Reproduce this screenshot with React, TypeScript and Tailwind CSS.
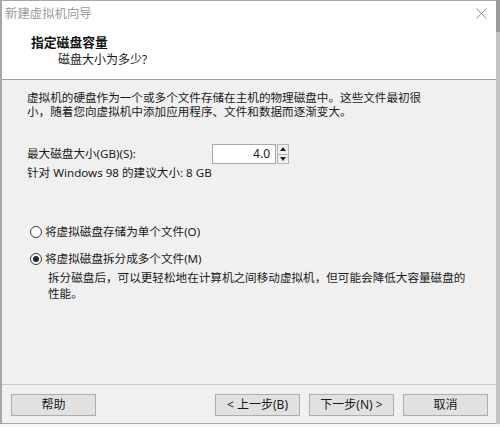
import React from "react";

const font = { fontFamily: '"Noto Sans", "Noto Sans CJK SC", sans-serif' };

function Btn({ children, className = "" }: { children: React.ReactNode; className?: string }) {
  return (
    <div
      className={
        "w-[85px] h-[22px] flex items-center justify-center border border-[#adadad] bg-[#e1e1e1] text-[12px] leading-[14px] text-[#1a1a1a] " +
        className
      }
    >
      {children}
    </div>
  );
}

function Radio({ checked }: { checked?: boolean }) {
  return (
    <div className="w-[12px] h-[12px] rounded-full border border-[#3a3a3a] bg-white flex items-center justify-center shrink-0">
      {checked && <div className="w-[6px] h-[6px] rounded-full bg-[#262626]" />}
    </div>
  );
}

export default function App() {
  return (
    <div className="w-[500px] h-[427px] bg-[#f7f7f7] flex overflow-hidden" style={font}>
      <div className="w-[496px] h-[424px] flex flex-col border-l-2 border-t border-b border-[#a6a6a6] bg-white">
        {/* title bar */}
        <div className="h-[25px] flex items-center justify-between pl-[3px] pr-[9px] bg-white">
          <span className="text-[12.4px] leading-[14px] text-[#9a9a9a]">新建虚拟机向导</span>
          <svg width="11" height="11" viewBox="0 0 11 11" className="text-[#8a8a8a]">
            <path d="M0.5 0.5 L10.5 10.5 M10.5 0.5 L0.5 10.5" stroke="currentColor" strokeWidth="1" />
          </svg>
        </div>
        {/* header */}
        <div className="h-[54px] bg-white pl-[29px] pt-[8px] border-b border-[#a0a0a0]">
          <div className="text-[12.8px] leading-[16px] font-bold text-[#111]">指定磁盘容量</div>
          <div className="mt-[2px] pl-[27px] text-[12px] leading-[16px] text-[#1a1a1a]">磁盘大小为多少?</div>
        </div>
        {/* body */}
        <div className="flex-1 bg-[#f0f0f0] flex flex-col">
          <div className="flex-1 px-[25px] pt-[11px] text-[11.6px] text-[#1a1a1a]">
            <div className="leading-[14px]">
              <div>虚拟机的硬盘作为一个或多个文件存储在主机的物理磁盘中。这些文件最初很</div>
              <div>小，随着您向虚拟机中添加应用程序、文件和数据而逐渐变大。</div>
            </div>
            <div className="mt-[25px] flex items-center h-[20px]">
              <span className="w-[185px] leading-[14px]">最大磁盘大小(GB)(S):</span>
              <div className="flex h-[20px]">
                <div className="w-[64px] h-[20px] bg-white border border-[#a8a8a8] flex items-center justify-end pr-[5px] text-[12px] leading-[14px]">
                  4.0
                </div>
                <div className="ml-[1px] w-[12px] h-[20px] flex flex-col border border-[#b5b5b5] bg-[#f0f0f0]">
                  <div className="flex-1 flex items-center justify-center border-b border-[#b5b5b5]">
                    <svg width="6" height="4" viewBox="0 0 6 4"><path d="M3 0 L6 4 L0 4 Z" fill="#222" /></svg>
                  </div>
                  <div className="flex-1 flex items-center justify-center">
                    <svg width="6" height="4" viewBox="0 0 6 4"><path d="M0 0 L6 0 L3 4 Z" fill="#222" /></svg>
                  </div>
                </div>
              </div>
            </div>
            <div className="mt-[2px] leading-[14px]">针对 Windows 98 的建议大小: 8 GB</div>

            <div className="mt-[44px] flex items-center gap-[3px] h-[16px] pl-[3px]">
              <Radio />
              <span className="leading-[14px]">将虚拟磁盘存储为单个文件(O)</span>
            </div>
            <div className="mt-[11px] flex items-center gap-[3px] h-[16px] pl-[3px]">
              <Radio checked />
              <span className="leading-[14px]">将虚拟磁盘拆分成多个文件(M)</span>
            </div>
            <div className="mt-[3px] pl-[21px] leading-[16px]">
              <div>拆分磁盘后，可以更轻松地在计算机之间移动虚拟机，但可能会降低大容量磁盘的</div>
              <div>性能。</div>
            </div>
          </div>
          {/* footer */}
          <div className="h-[39px] border-t border-[#c6c6c6] flex items-start pt-[9px] pl-[9px]">
            <Btn>帮助</Btn>
            <Btn className="ml-[119px]">&lt; 上一步(B)</Btn>
            <Btn className="ml-[9px]">下一步(N) &gt;</Btn>
            <Btn className="ml-[9px]">取消</Btn>
          </div>
        </div>
      </div>
      <div className="w-[4px] h-[424px] flex flex-col">
        <div className="h-[32px] bg-[#9c9c9c]" />
        <div className="flex-1 bg-[#c4c4c4]" />
      </div>
    </div>
  );
}
